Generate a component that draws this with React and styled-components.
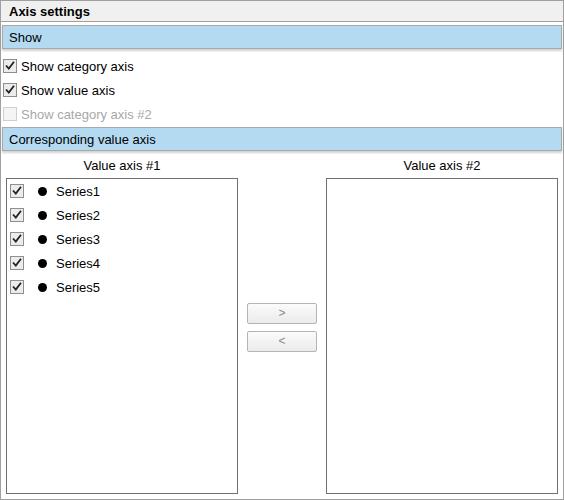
import React from 'react'
import styled, { createGlobalStyle } from 'styled-components'

const GlobalStyle = createGlobalStyle`
	html, body {
		margin: 0;
		padding: 0;
		background: #fff;
	}
	body {
		font-family: 'Liberation Sans', Arial, sans-serif;
		font-size: 13px;
		color: #000;
	}
`

const Window = styled.div`
	width: 564px;
	height: 500px;
	box-sizing: border-box;
	border: 1px solid #a0a0a0;
	display: flex;
	flex-direction: column;
	background: #fff;
`

const TitleBar = styled.div`
	height: 20px;
	flex: none;
	background: #f0f0f0;
	border-bottom: 1px solid #a0a0a0;
	display: flex;
	align-items: center;
	padding-left: 8px;
	font-weight: bold;
	font-size: 13px;
`

const Body = styled.div`
	flex: 1;
	display: flex;
	flex-direction: column;
	padding: 3px 1px 5px 1px;
	min-height: 0;
`

const SectionHeader = styled.div`
	height: 22px;
	flex: none;
	background: #b3daf1;
	border: 1px solid #a9a9a9;
	box-shadow: 0 2px 2px rgba(0, 0, 0, 0.18);
	display: flex;
	align-items: center;
	padding-left: 6px;
	margin-top: ${props => props.gap || 0}px;
`

const CheckList = styled.div`
	display: flex;
	flex-direction: column;
	margin-top: 5px;
`

const CheckRow = styled.label`
	height: 24px;
	display: flex;
	align-items: center;
	gap: 4px;
	padding-left: 1px;
	color: ${props => (props.disabled ? '#a8a8a8' : '#000')};
`

const Columns = styled.div`
	flex: 1;
	display: grid;
	grid-template-columns: 232px 1fr 232px;
	grid-template-rows: 26px 1fr;
	padding: 1px 4px 0 4px;
	min-height: 0;
`

const ColumnLabel = styled.div`
	display: flex;
	align-items: center;
	justify-content: center;
	grid-row: 1;
	grid-column: ${props => props.col};
`

const ListBox = styled.div`
	grid-row: 2;
	grid-column: ${props => props.col};
	border: 1px solid #707070;
	background: #fff;
	padding: 0 0 0 3px;
	box-sizing: border-box;
`

const SeriesRow = styled.div`
	height: 24px;
	display: flex;
	align-items: center;
`

const Dot = styled.span`
	width: 9px;
	height: 9px;
	border-radius: 50%;
	background: #000;
	margin: 0 9px 0 14px;
`

const Mover = styled.div`
	grid-row: 2;
	grid-column: 2;
	display: flex;
	flex-direction: column;
	align-items: center;
	justify-content: center;
	gap: 7px;
	padding-bottom: 18px;
`

const MoveButton = styled.button`
	width: 70px;
	height: 21px;
	border: 1px solid #b4b4b4;
	border-radius: 2px;
	background: linear-gradient(#fbfbfb, #ebebeb);
	color: #8a8a8a;
	font-family: 'Liberation Sans', Arial, sans-serif;
	font-size: 12px;
	padding: 0;
`

const Box = ({ checked, disabled }) => (
	<svg width="14" height="14" viewBox="0 0 14 14">
		<rect x="0.5" y="0.5" width="13" height="13" fill={disabled ? '#f4f4f4' : '#ececec'} stroke={disabled ? '#cfcfcf' : '#8e8e8e'} />
		{checked && <path d="M3 6.5 L5.8 9.6 L11 2.8" fill="none" stroke="#222" strokeWidth="1.8" />}
	</svg>
)

const series = ['Series1', 'Series2', 'Series3', 'Series4', 'Series5']

export default function App() {
	return (
		<>
			<GlobalStyle />
			<Window>
				<TitleBar>Axis settings</TitleBar>
				<Body>
					<SectionHeader>Show</SectionHeader>
					<CheckList>
						<CheckRow>
							<Box checked />
							Show category axis
						</CheckRow>
						<CheckRow>
							<Box checked />
							Show value axis
						</CheckRow>
						<CheckRow disabled>
							<Box disabled />
							Show category axis #2
						</CheckRow>
					</CheckList>
					<SectionHeader gap={1}>Corresponding value axis</SectionHeader>
					<Columns>
						<ColumnLabel col={1}>Value axis #1</ColumnLabel>
						<ColumnLabel col={3}>Value axis #2</ColumnLabel>
						<ListBox col={1}>
							{series.map(name => (
								<SeriesRow key={name}>
									<Box checked />
									<Dot />
									{name}
								</SeriesRow>
							))}
						</ListBox>
						<Mover>
							<MoveButton>&gt;</MoveButton>
							<MoveButton>&lt;</MoveButton>
						</Mover>
						<ListBox col={3} />
					</Columns>
				</Body>
			</Window>
		</>
	)
}
